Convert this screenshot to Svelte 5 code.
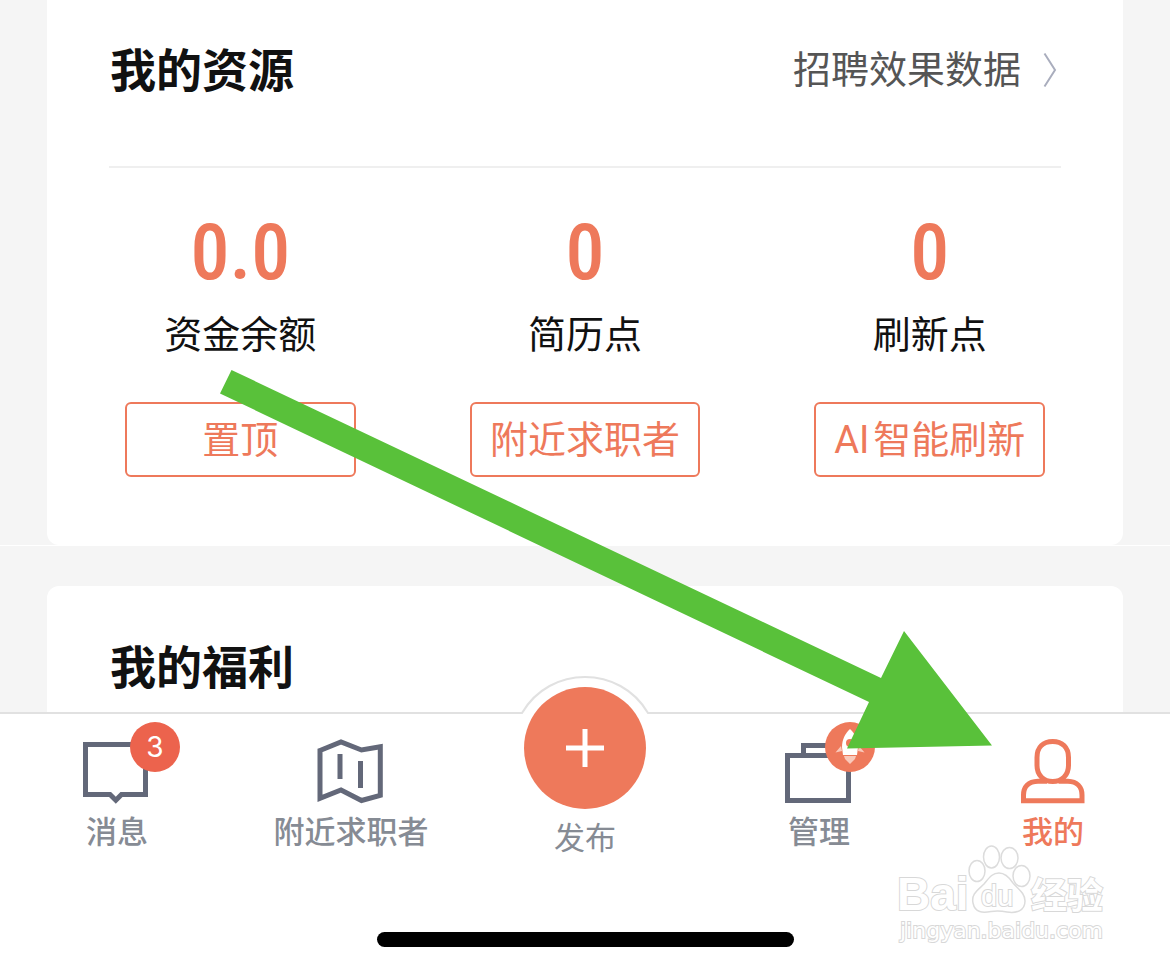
<script>
  const stats = [
    { value: '0.0', label: '资金余额', action: '置顶' },
    { value: '0', label: '简历点', action: '附近求职者' },
    { value: '0', label: '刷新点', action: 'AI\u200a智能刷新' }
  ];
</script>

<div class="screen">
  <main>
    <section class="card resources">
      <header>
        <h2>我的资源</h2>
        <a href="#data">
          招聘效果数据
          <svg class="chevron" width="14" height="36" viewBox="0 0 14 36" aria-hidden="true">
            <path d="M1.500 1.500L12 18L1.500 34.500" fill="none" stroke="#a9adbd" stroke-width="2" />
          </svg>
        </a>
      </header>
      <div class="stats">
        {#each stats as stat}
          <div class="stat">
            <strong>{stat.value}</strong>
            <span>{stat.label}</span>
            <button type="button">{stat.action}</button>
          </div>
        {/each}
      </div>
    </section>
    <div class="seam"></div>
    <section class="card benefits">
      <h2>我的福利</h2>
    </section>
  </main>

  <nav>
    <div class="tabs">
      <a class="tab" href="#messages">
        <span class="icon">
          <svg viewBox="0 0 68 68" aria-hidden="true">
            <path d="M2.500 6.500H62.500V56.500H38.500L32.800 62.200L27 56.500H2.500Z" />
          </svg>
          <span class="badge count">3</span>
        </span>
        <span class="label">消息</span>
      </a>
      <a class="tab" href="#nearby">
        <span class="icon">
          <svg viewBox="0 0 68 68" aria-hidden="true">
            <path d="M3 12.500L24 4L44.500 12L63.300 8.800V57.300L44.500 62.500L24 52L3 60.300Z" />
            <path d="M23 16V41M43.500 23V50" />
          </svg>
        </span>
        <span class="label">附近求职者</span>
      </a>
      <a class="tab publish" href="#publish">
        <svg class="arch" width="150" height="40" viewBox="0 0 150 40" aria-hidden="true">
          <path d="M0 40V38H12C40 -10 110 -10 138 38H150V40Z" fill="#fff" />
          <path d="M0 38H12C40 -10 110 -10 138 38H150" fill="none" stroke="#e1e1e1" stroke-width="2" />
        </svg>
        <span class="plus">
          <svg width="38" height="38" viewBox="0 0 38 38" aria-hidden="true">
            <path d="M19 0V38M0 19H38" fill="none" stroke="#fff" stroke-width="5" />
          </svg>
        </span>
        <span class="label">发布</span>
      </a>
      <a class="tab" href="#manage">
        <span class="icon">
          <svg viewBox="0 0 68 68" aria-hidden="true">
            <path d="M2.500 17.500H63.500V62.500H2.500ZM18.500 17.500V7.500H48V17.500" />
          </svg>
          <span class="badge rocket">
            <svg viewBox="0 0 50 50" aria-hidden="true">
              <path d="M16 24L10.500 30.500L17 29ZM34 24L39.500 30.500L33 29Z" fill="#f9c9bb" />
              <path d="M25 7C20 11.500 17 18 17 25L18 33H32L33 25C33 18 30 11.500 25 7Z" fill="#fff" />
              <circle cx="25" cy="21" r="4" fill="#ee795b" />
              <path d="M19 34H31L30 37L25 42L20 37Z" fill="#f9c9bb" />
            </svg>
          </span>
        </span>
        <span class="label">管理</span>
      </a>
      <a class="tab active" href="#me">
        <span class="icon">
          <svg viewBox="0 0 68 68" aria-hidden="true">
            <path d="M18 19.500C18 9 24.500 3.500 33.700 3.500S49.500 9 49.500 19.500V27.500C49.500 37.500 42.500 43.500 33.700 43.500S18 37.500 18 27.500Z" />
            <path d="M28 43.200H19C9 43.500 4.500 49 4.500 57V62.800H63V57C63 49 58 43.500 49 43.200H39.500" />
          </svg>
        </span>
        <span class="label">我的</span>
      </a>
    </div>
    <div class="home"></div>
  </nav>

  <svg class="watermark" width="216" height="110" viewBox="0 0 216 110" role="img" aria-label="Baidu 经验">
    <g fill="#fff" stroke="#dcdcdc" stroke-width="1.500">
      <ellipse cx="82" cy="31" rx="8" ry="10.500" />
      <ellipse cx="96.500" cy="17" rx="8" ry="11" />
      <ellipse cx="114.500" cy="18" rx="8.500" ry="10.500" />
      <ellipse cx="126.500" cy="36" rx="8.500" ry="10.500" />
      <path d="M104 33C97 33 94 38 89 44C83 50 76 54 78 63C80 73 88 73 96 71.500Q104 70.500 112 72C121 73.500 130 71 130 61C130 53 123 49 118 43C114 37 110 33 104 33Z" />
    </g>
    <g class="marks">
      <text x="2" y="70" font-size="46" font-weight="700">Bai</text>
      <text x="86" y="66" font-size="29">du</text>
      <text x="136" y="69" font-size="36" font-weight="700">经验</text>
      <text class="site" x="5" y="98" font-size="22">jingyan.baidu.com</text>
    </g>
  </svg>

  <svg class="pointer" viewBox="0 0 1170 971" aria-hidden="true">
    <path d="M231.500 370L881 678L904 631L992 745.500L847 748.500L869 702L220 393.500Z" fill="#59c13a" />
  </svg>
</div>

<style>
  :global(body) {
    margin: 0;
  }
  .screen {
    position: relative;
    display: grid;
    grid-template-rows: minmax(0, 1fr) auto;
    height: 100vh;
    overflow: hidden;
    background: #f5f5f5;
    color: #111;
    font-family: "Noto Sans CJK SC", sans-serif;
  }
  main {
    overflow: hidden;
  }
  a {
    color: inherit;
    text-decoration: none;
  }
  .card {
    margin: 0 47px;
    background: #fff;
  }
  .resources {
    border-radius: 0 0 12px 12px;
    padding-bottom: 68px;
  }
  .seam {
    height: 1px;
    margin-bottom: 40px;
    background: #fff;
  }
  .benefits {
    border-radius: 12px 12px 0 0;
    padding: 44px 63px 200px;
  }
  h2 {
    margin: 0;
    font-size: 46px;
    line-height: 68px;
    font-weight: 700;
  }
  header {
    display: flex;
    justify-content: space-between;
    align-items: center;
    height: 168px;
    margin: 0 62px;
    padding-bottom: 32px;
    box-sizing: border-box;
    border-bottom: 2px solid #efefef;
  }
  header h2 {
    padding-left: 1px;
  }
  header a {
    display: flex;
    align-items: center;
    gap: 22px;
    padding-right: 4px;
    font-size: 38px;
    line-height: 56px;
    color: #555;
  }
  .chevron {
    margin-top: 6px;
  }
  .stats {
    display: grid;
    grid-template-columns: repeat(3, 1fr);
    padding: 46px 21px 0;
  }
  .stat {
    display: flex;
    flex-direction: column;
    align-items: center;
  }
  .stat strong {
    font-family: "Roboto Condensed", "Liberation Sans Narrow", Roboto, sans-serif;
    font-size: 78px;
    line-height: 78px;
    font-weight: 500;
    color: #ee795b;
  }
  .stat span {
    margin-top: 12px;
    font-size: 38px;
    line-height: 56px;
  }
  .stat button {
    width: 67%;
    height: 75px;
    margin-top: 42px;
    padding: 0;
    border: 2px solid #ee795b;
    border-radius: 6px;
    background: #fff;
    color: #ee795b;
    font: 38px/56px Roboto, "Noto Sans CJK SC", sans-serif;
    white-space: nowrap;
  }
  nav {
    position: relative;
    border-top: 2px solid #e1e1e1;
    background: #fff;
  }
  .tabs {
    display: grid;
    grid-template-columns: repeat(5, 1fr);
    height: 218px;
  }
  .tab {
    position: relative;
    display: flex;
    flex-direction: column;
    align-items: center;
    padding-top: 24px;
    color: #868b94;
  }
  .icon {
    position: relative;
    width: 68px;
    height: 68px;
  }
  .icon > svg {
    display: block;
    fill: none;
    stroke: #636879;
    stroke-width: 5;
  }
  .active .icon > svg {
    stroke: #ee795b;
  }
  .active {
    color: #ee795b;
  }
  .label {
    margin-top: 1px;
    font-size: 31px;
    line-height: 46px;
    font-weight: 500;
  }
  .badge {
    position: absolute;
    left: 47px;
    top: -16px;
    width: 50px;
    height: 50px;
    border-radius: 50%;
    text-align: center;
  }
  .count {
    background: #ec634d;
    color: #fff;
    font: 28px/50px Inter, sans-serif;
  }
  .rocket {
    left: 40px;
    background: #ee795b;
  }
  .rocket svg {
    display: block;
  }
  .publish {
    padding-top: 0;
  }
  .arch {
    position: absolute;
    top: -39px;
    left: 50%;
    margin-left: -75px;
  }
  .plus {
    position: relative;
    display: flex;
    align-items: center;
    justify-content: center;
    width: 122px;
    height: 122px;
    margin-top: -27px;
    border-radius: 50%;
    background: #ee795b;
  }
  .publish .label {
    margin-top: 4px;
    font-weight: 400;
  }
  .home {
    width: 417px;
    height: 15px;
    margin: 0 auto 24px;
    border-radius: 8px;
    background: #000;
  }
  .watermark {
    position: absolute;
    right: 59px;
    bottom: 21px;
  }
  .marks {
    font-family: "Liberation Sans", "Noto Sans CJK SC", sans-serif;
    fill: #fff;
    stroke: #d8d8d8;
    stroke-width: 2;
    paint-order: stroke;
  }
  .site {
    font-family: "DejaVu Sans", sans-serif;
  }
  .pointer {
    position: absolute;
    inset: 0;
    width: 100%;
    height: 100%;
    pointer-events: none;
  }
</style>
